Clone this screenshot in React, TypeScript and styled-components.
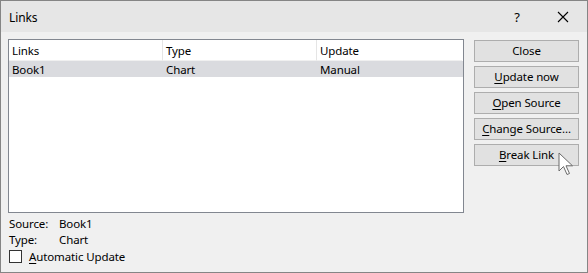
import React from "react";
import styled, { createGlobalStyle } from "styled-components";

const Global = createGlobalStyle`
  html, body { margin: 0; padding: 0; background: #f0f0f0; }
  * { box-sizing: border-box; }
  body { font-family: "Noto Sans", "Open Sans", sans-serif; font-size: 11.5px; letter-spacing: -0.12px; color: #000; }
`;

const Window = styled.div`
  width: 588px;
  height: 273px;
  border: 1px solid #858585;
  background: #f0f0f0;
  display: flex;
  flex-direction: column;
`;

const TitleBar = styled.div`
  height: 31px;
  background: #e6e6e6;
  display: flex;
  align-items: center;
  padding-left: 8px;
  padding-right: 1px;
  flex-shrink: 0;
`;

const Title = styled.div`
  flex: 1;
  font-size: 12px;
  padding-top: 2px;
`;

const TitleButton = styled.div<{ $w: number }>`
  width: ${(p) => p.$w}px;
  height: 31px;
  display: flex;
  align-items: center;
  justify-content: center;
  font-size: 13px;
`;

const Body = styled.div`
  flex: 1;
  padding: 7px 0 0 7px;
  display: grid;
  grid-template-columns: 456px 105px;
  column-gap: 10px;
  align-content: start;
`;

const Left = styled.div`
  display: flex;
  flex-direction: column;
`;

const ListBox = styled.div`
  height: 174px;
  border: 1px solid #828790;
  background: #fff;
`;

const Row = styled.div<{ $header?: boolean; $selected?: boolean }>`
  display: grid;
  grid-template-columns: 154px 154px 145px;
  height: ${(p) => (p.$header ? 21 : 16)}px;
  background: ${(p) => (p.$selected ? "#dadbdf" : "#fff")};
`;

const Cell = styled.div<{ $header?: boolean; $last?: boolean }>`
  padding-left: 3px;
  display: flex;
  align-items: center;
  white-space: nowrap;
  border-right: ${(p) => (p.$header && !p.$last ? "1px solid #e5e5e5" : "none")};
  border-bottom: ${(p) => (p.$header ? "1px solid #f0f0f0" : "none")};
`;

const Info = styled.div`
  display: grid;
  grid-template-columns: 50px auto;
  padding-left: 1px;
  margin-top: 3px;
  line-height: 16px;
`;

const CheckRow = styled.label`
  display: flex;
  align-items: center;
  height: 16px;
  padding-left: 1px;
`;

const Box = styled.span`
  width: 13px;
  height: 13px;
  border: 1px solid #333;
  background: #fff;
  margin-right: 7px;
`;

const Buttons = styled.div`
  display: flex;
  flex-direction: column;
  gap: 4px;
  padding-top: 1px;
  position: relative;
`;

const Button = styled.div`
  height: 22px;
  border: 1px solid #adadad;
  background: #e1e1e1;
  display: flex;
  align-items: center;
  justify-content: center;
  padding-bottom: 1px;
`;

const U = styled.span`
  text-decoration: underline;
  text-underline-offset: 2px;
`;

const Cursor = styled.svg`
  position: absolute;
  left: 84px;
  top: 113px;
`;

export default function App() {
  return (
    <>
      <Global />
      <Window>
        <TitleBar>
          <Title>Links</Title>
          <TitleButton $w={46}>
            <span>?</span>
          </TitleButton>
          <TitleButton $w={46}>
            <svg width="12" height="12" viewBox="0 0 12 12">
              <path d="M1 1 L11 11 M11 1 L1 11" stroke="#000" strokeWidth="1.1" />
            </svg>
          </TitleButton>
        </TitleBar>
        <Body>
          <Left>
            <ListBox>
              <Row $header>
                <Cell $header>Links</Cell>
                <Cell $header>Type</Cell>
                <Cell $header $last>Update</Cell>
              </Row>
              <Row $selected>
                <Cell>Book1</Cell>
                <Cell>Chart</Cell>
                <Cell>Manual</Cell>
              </Row>
            </ListBox>
            <Info>
              <span>Source:</span>
              <span>Book1</span>
              <span>Type:</span>
              <span>Chart</span>
            </Info>
            <CheckRow>
              <Box />
              <span>
                <U>A</U>utomatic Update
              </span>
            </CheckRow>
          </Left>
          <Buttons>
            <Button>Close</Button>
            <Button>
              <span>
                <U>U</U>pdate now
              </span>
            </Button>
            <Button>
              <span>
                <U>O</U>pen Source
              </span>
            </Button>
            <Button>
              <span>
                <U>C</U>hange Source...
              </span>
            </Button>
            <Button>
              <span>
                <U>B</U>reak Link
              </span>
            </Button>
            <Cursor width="16" height="25" viewBox="0 0 16 25">
              <path
                d="M1 1 L1 19 L5.5 14.5 L9 22.5 L11.5 21.5 L8 13.8 L14.5 13.8 Z"
                fill="#fff"
                stroke="#6a6a6a"
                strokeWidth="1"
                strokeLinejoin="round"
              />
            </Cursor>
          </Buttons>
        </Body>
      </Window>
    </>
  );
}
